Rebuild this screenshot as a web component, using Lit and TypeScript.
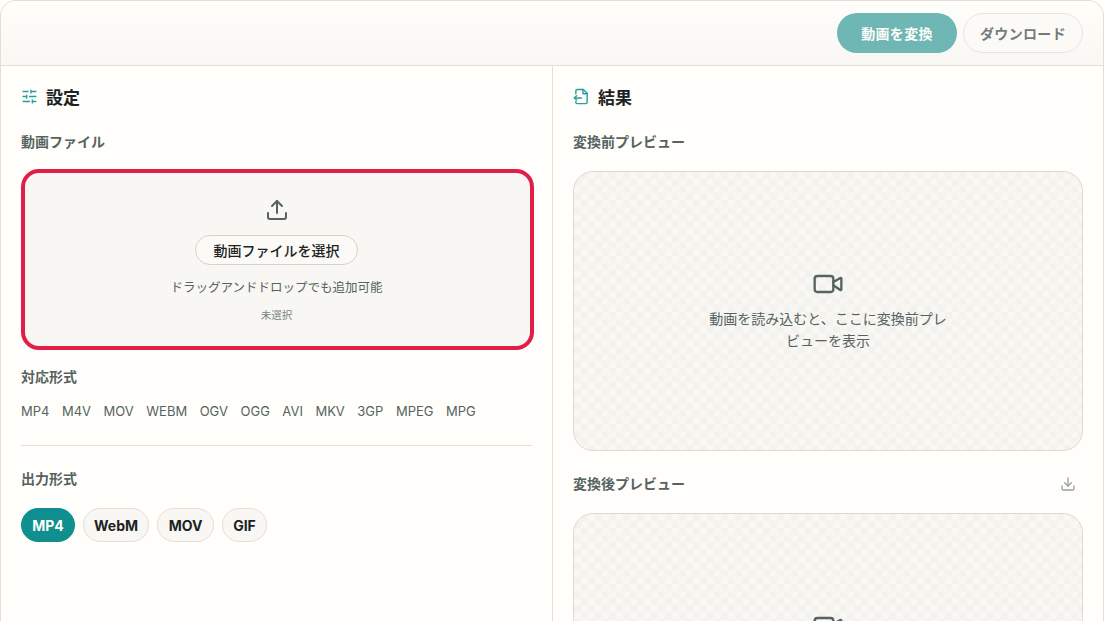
import { LitElement, html, css } from "lit";
import { customElement } from "lit/decorators.js";

const videoIcon = html`<svg class="vid" viewBox="0 0 24 24" fill="none" stroke="currentColor" stroke-width="1.75" stroke-linecap="round" stroke-linejoin="round"><path d="m16 13 5.223 3.482a.5.5 0 0 0 .777-.416V7.87a.5.5 0 0 0-.752-.432L16 10.5"/><rect x="2" y="6" width="14" height="12" rx="2"/></svg>`;

const pills = [
  { label: "MP4", width: 54, on: true },
  { label: "WebM", width: 66, on: false },
  { label: "MOV", width: 57, on: false },
  { label: "GIF", width: 45, on: false },
];

@customElement("app-root")
export class AppRoot extends LitElement {
  static styles = css`
    :host { display: block; height: 621px; overflow: hidden; background: #fffefb;
      font-family: Inter, "Noto Sans CJK JP", sans-serif; color: #1c2322; }
    * { box-sizing: border-box; }
    .win { border: 1px solid #e3dfd5; border-bottom: none; border-radius: 16px 16px 0 0; height: 621px; background: #fffefb; overflow: hidden; }
    .top { height: 65px; border-bottom: 1px solid #e3dfd5; display: flex; justify-content: flex-end; align-items: flex-start; gap: 6px; padding: 12px 20px 0 0;
      background: linear-gradient(180deg, #fffefb 0%, #f8f7f3 100%); }
    .btn { height: 40px; width: 120px; border-radius: 20px; font-size: 14px; letter-spacing: 0.35px; font-weight: 700; display: flex; align-items: center; justify-content: center; }
    .primary { background: #6fb7b5; color: #fffefb; }
    .ghost { background: #fbfaf7; border: 1px solid #e8e5dc; color: #767a77; }
    .cols { display: grid; grid-template-columns: 552px 1fr; }
    .left { border-right: 1px solid #e3dfd5; padding: 19px 19px 0 20px; height: 560px; }
    .right { padding: 19px 20px 0 20px; }
    .title { display: flex; align-items: center; gap: 8px; height: 22px; font-size: 17px; font-weight: 700; color: #1c2322; }
    .title svg { width: 17px; height: 17px; color: #2a9d9d; }
    .label { font-size: 14px; font-weight: 700; color: #566361; line-height: 20px; }
    .l1 { margin-top: 25px; }
    .drop { margin-top: 17px; height: 181px; width: 513px; border: 4px solid #e11d48; border-radius: 18px; background: #f8f7f3; display: flex; flex-direction: column; align-items: center; padding: 25px 2px 0 0; }
    .up { width: 24px; height: 24px; color: #566361; }
    .pick { margin-top: 13px; width: 163px; height: 30px; border-radius: 15px; border: 1px solid #d6d3c8; background: #fbfaf7; font-size: 14px; font-weight: 500; display: flex; align-items: center; justify-content: center; color: #1c2322; }
    .hint { margin-top: 14px; font-size: 12.5px; line-height: 18px; color: #566361; }
    .none { margin-top: 11px; font-size: 10.5px; line-height: 16px; color: #7b8482; }
    .l2 { margin-top: 17px; }
    .fmts { margin-top: 15px; display: flex; gap: 12.5px; font-size: 13px; line-height: 18px; color: #566361; }
    .rule { margin-top: 25px; border-top: 1px solid #e3dfd5; width: 511px; }
    .l3 { margin-top: 23px; }
    .pills { margin-top: 19px; display: flex; gap: 8px; }
    .pill { height: 34px; border-radius: 17px; font-size: 14px; font-weight: 700; display: flex; align-items: center; justify-content: center; border: 1px solid #e3dfd5; background: #f8f7f3; color: #1c2322; }
    .pill.on { background: #0f8f8f; border-color: #0f8f8f; color: #fffefb; }
    .preview { margin-top: 19px; height: 280px; width: 510px; border: 1px solid #dcd9ce; border-radius: 20px; display: flex; flex-direction: column; align-items: center; padding-top: 96px; color: #566361;
      background-color: #f8f7f3;
      background-image: conic-gradient(#f3f2ed 25%, transparent 0 50%, #f3f2ed 0 75%, transparent 0);
      background-size: 14px 14px; }
    .vid { width: 32px; height: 32px; }
    .ptext { margin-top: 8px; width: 240px; font-size: 14px; line-height: 22px; text-align: center; color: #566361; }
    .row { display: flex; align-items: center; justify-content: space-between; margin-top: 23px; width: 510px; }
    .dl { width: 16px; height: 16px; color: #9a9f9c; margin-right: 7px; }
  `;

  render() {
    return html`<div class="win">
      <div class="top">
        <div class="btn primary">動画を変換</div>
        <div class="btn ghost">ダウンロード</div>
      </div>
      <div class="cols">
        <div class="left">
          <div class="title"><svg viewBox="0 0 24 24" fill="none" stroke="currentColor" stroke-width="2" stroke-linecap="round"><path d="M10 5H3M12 19H3M14 3v4M16 17v4M21 12h-9M21 19h-5M21 5h-7M8 10v4M8 12H3"/></svg>設定</div>
          <div class="label l1">動画ファイル</div>
          <div class="drop">
            <svg class="up" viewBox="0 0 24 24" fill="none" stroke="currentColor" stroke-width="2" stroke-linecap="round" stroke-linejoin="round"><path d="M12 3v12"/><path d="m17 8-5-5-5 5"/><path d="M21 15v4a2 2 0 0 1-2 2H5a2 2 0 0 1-2-2v-4"/></svg>
            <div class="pick">動画ファイルを選択</div>
            <div class="hint">ドラッグアンドドロップでも追加可能</div>
            <div class="none">未選択</div>
          </div>
          <div class="label l2">対応形式</div>
          <div class="fmts">${["MP4","M4V","MOV","WEBM","OGV","OGG","AVI","MKV","3GP","MPEG","MPG"].map(f => html`<span>${f}</span>`)}</div>
          <div class="rule"></div>
          <div class="label l3">出力形式</div>
          <div class="pills">
            ${pills.map(p => html`<div class="pill ${p.on ? "on" : ""}" style="width:${p.width}px">${p.label}</div>`)}
          </div>
        </div>
        <div class="right">
          <div class="title"><svg viewBox="0 0 24 24" fill="none" stroke="currentColor" stroke-width="2" stroke-linecap="round" stroke-linejoin="round"><path d="M4 8V4a2 2 0 0 1 2-2h8.5L20 7.5V20a2 2 0 0 1-2 2H6a2 2 0 0 1-2-2v-1"/><path d="M14 2v6h6"/><path d="M2 14h10"/><path d="m5 11-3 3 3 3"/></svg>結果</div>
          <div class="label l1">変換前プレビュー</div>
          <div class="preview">${videoIcon}<div class="ptext">動画を読み込むと、ここに変換前プレビューを表示</div></div>
          <div class="row"><div class="label">変換後プレビュー</div>
            <svg class="dl" viewBox="0 0 24 24" fill="none" stroke="currentColor" stroke-width="2" stroke-linecap="round" stroke-linejoin="round"><path d="M12 15V3"/><path d="m7 10 5 5 5-5"/><path d="M21 15v4a2 2 0 0 1-2 2H5a2 2 0 0 1-2-2v-4"/></svg></div>
          <div class="preview">${videoIcon}</div>
        </div>
      </div>
    </div>`;
  }
}
